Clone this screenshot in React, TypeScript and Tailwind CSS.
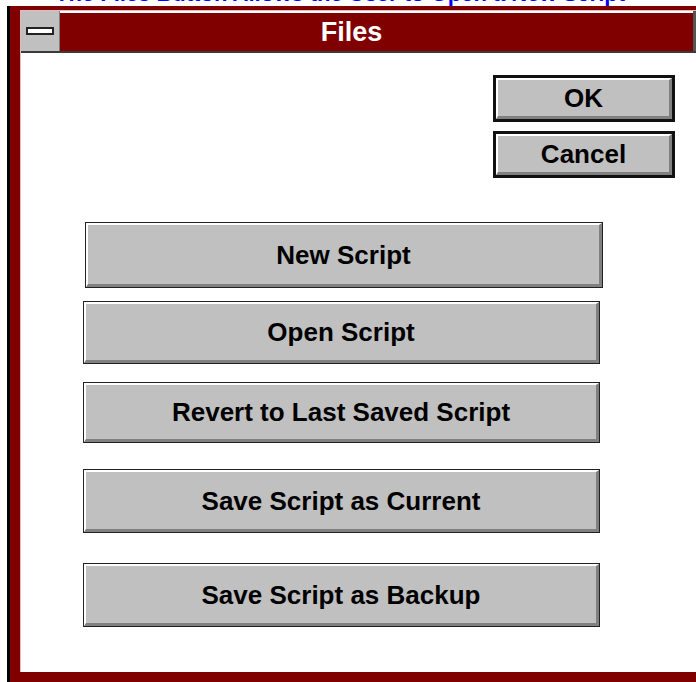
import React from 'react';

const FONT = { fontFamily: '"Liberation Sans", Arial, sans-serif' };

// Win 3.x style push button: dark outline, white top/left bevel, grey shadow bottom/right
function PushButton({
  label,
  className,
  isDefault,
}: {
  label: string;
  className: string;
  isDefault?: boolean;
}) {
  return (
    <button
      type="button"
      className={`${className} flex items-stretch bg-[#c0c0c0] p-0 ${
        isDefault ? 'border-[3px] border-[#111]' : 'border border-[#222]'
      }`}
    >
      <span className="flex flex-1 items-center justify-center border-t-2 border-l-2 border-r-[3px] border-b-[3px] border-t-white border-l-white border-r-[#808080] border-b-[#808080] text-[26px] font-bold text-black leading-none">
        {label}
      </span>
    </button>
  );
}

export default function App() {
  return (
    <div className="w-[696px] h-[682px] overflow-hidden bg-white" style={FONT}>
      {/* heading link running off the top edge */}
      <div className="h-[6px] overflow-hidden">
        <div className="-mt-[17px] pl-[55px] whitespace-nowrap text-[22px] leading-none font-bold text-[#0000ff]">
          The Files Button Allows the User to Open a New Script
        </div>
      </div>

      {/* window frame */}
      <div className="ml-[7px] h-[676px] border-l-[3px] border-black bg-[#800000] pl-[10px] pt-[4px] pb-[10px]">
        <div className="flex h-full flex-col border-t border-l border-[#e9b8b8] bg-white">
          {/* title bar */}
          <div className="flex h-[42px] shrink-0 border-b-2 border-[#3a3a3a]">
            <div className="flex w-[39px] items-center justify-center bg-[#c0c0c0] border-r border-[#808080]">
              <div className="h-[8px] w-[28px] border-2 border-[#222] bg-white" />
            </div>
            <div className="flex flex-1 items-center justify-center border-t-2 border-white bg-[#800000] pr-[50px] text-[27px] font-bold text-white">
              Files
            </div>
            <div className="w-[3px] bg-[#555]" />
          </div>

          {/* dialog body */}
          <div className="flex flex-1 flex-col pt-[22px]">
            <div className="flex flex-col gap-[9px] pl-[472px]">
              <PushButton label="OK" isDefault className="h-[47px] w-[182px]" />
              <PushButton label="Cancel" isDefault className="h-[47px] w-[182px]" />
            </div>

            <div className="mt-[44px] flex flex-col pl-[62px]">
              <PushButton label="New Script" className="ml-[2px] h-[66px] w-[518px]" />
              <PushButton label="Open Script" className="mt-[13px] h-[63px] w-[517px]" />
              <PushButton label="Revert to Last Saved Script" className="mt-[18px] h-[61px] w-[517px]" />
              <PushButton label="Save Script as Current" className="mt-[26px] h-[64px] w-[517px]" />
              <PushButton label="Save Script as Backup" className="mt-[30px] h-[64px] w-[517px]" />
            </div>
          </div>
        </div>
      </div>
    </div>
  );
}
